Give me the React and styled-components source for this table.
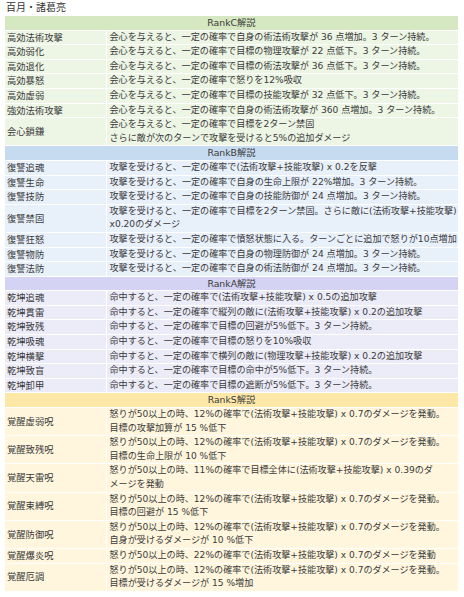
import React from 'react'
import styled, { createGlobalStyle } from 'styled-components'

const GlobalStyle = createGlobalStyle`
  html, body {
    margin: 0;
    padding: 0;
    background: #ffffff;
  }
  body {
    font-family: "DejaVu Sans", "Noto Sans CJK JP", sans-serif;
    color: #3a3a3a;
  }
`

const tones = {
  C: { head: '#d5e8c1', row: '#edf5e5' },
  B: { head: '#c7dbf0', row: '#e8f0fa' },
  A: { head: '#d4d3f4', row: '#ececf8' },
  S: { head: '#fde8a8', row: '#fff6dd' }
}

const Page = styled.div`
  width: 464px;
  padding: 0 6px 0 5px;
  box-sizing: border-box;
`

const Title = styled.div`
  height: 15px;
  line-height: 15px;
  padding-left: 1px;
  font-size: 10px;
  color: #333333;
`

const Table = styled.table`
  width: 453px;
  border-collapse: collapse;
  table-layout: fixed;
  font-size: 9.3px;
  line-height: 13.6px;
`

const HeadCell = styled.td`
  background: ${props => tones[props.$tone].head};
  text-align: center;
  padding: 0;
  border: 1px solid #ffffff;
  border-left: none;
  border-right: none;
`

const Row = styled.tr`
  background: ${props => tones[props.$tone].row};
`

const NameCell = styled.td`
  width: 101px;
  padding: 0 0 0 2px;
  vertical-align: middle;
  white-space: nowrap;
  border-bottom: 1px solid #ffffff;
  border-right: 1px solid #ffffff;
`

const DescCell = styled.td`
  padding: 0 0 0 3px;
  font-size: 9.1px;
  white-space: nowrap;
  border-bottom: 1px solid #ffffff;
`

const Line = styled.div``

const sections = [
  {
    rank: 'C',
    rows: [
      ['高効法術攻撃', ['会心を与えると、一定の確率で自身の術法術攻撃が 36 点増加。3 ターン持続。']],
      ['高効弱化', ['会心を与えると、一定の確率で目標の物理攻撃が 22 点低下。3 ターン持続。']],
      ['高効退化', ['会心を与えると、一定の確率で目標の術法攻撃が 36 点低下。3 ターン持続。']],
      ['高効暴怒', ['会心を与えると、一定の確率で怒りを12%吸収']],
      ['高効虚弱', ['会心を与えると、一定の確率で目標の技能攻撃が 32 点低下。3 ターン持続。']],
      ['強効法術攻撃', ['会心を与えると、一定の確率で自身の術法術攻撃が 360 点増加。3 ターン持続。']],
      ['会心鎖鎌', ['会心を与えると、一定の確率で目標を2ターン禁固', 'さらに敵が次のターンで攻撃を受けると5%の追加ダメージ']]
    ]
  },
  {
    rank: 'B',
    rows: [
      ['復讐追魂', ['攻撃を受けると、一定の確率で(法術攻撃+技能攻撃) x 0.2を反撃']],
      ['復讐生命', ['攻撃を受けると、一定の確率で自身の生命上限が 22%増加。3 ターン持続。']],
      ['復讐技防', ['攻撃を受けると、一定の確率で自身の技能防御が 24 点増加。3 ターン持続。']],
      ['復讐禁固', ['攻撃を受けると、一定の確率で目標を2ターン禁固。さらに敵に(法術攻撃+技能攻撃)', 'x0.20のダメージ']],
      ['復讐狂怒', ['攻撃を受けると、一定の確率で憤怒状態に入る。ターンごとに追加で怒りが10点増加']],
      ['復讐物防', ['攻撃を受けると、一定の確率で自身の物理防御が 24 点増加。3 ターン持続。']],
      ['復讐法防', ['攻撃を受けると、一定の確率で自身の術法防御が 24 点増加。3 ターン持続。']]
    ]
  },
  {
    rank: 'A',
    rows: [
      ['乾坤追魂', ['命中すると、一定の確率で(法術攻撃+技能攻撃) x 0.5の追加攻撃']],
      ['乾坤貫雷', ['命中すると、一定の確率で縦列の敵に(法術攻撃+技能攻撃) x 0.2の追加攻撃']],
      ['乾坤致残', ['命中すると、一定の確率で目標の回避が5%低下。3 ターン持続。']],
      ['乾坤吸魂', ['命中すると、一定の確率で目標の怒りを10%吸収']],
      ['乾坤横撃', ['命中すると、一定の確率で横列の敵に(物理攻撃+技能攻撃) x 0.2の追加攻撃']],
      ['乾坤致盲', ['命中すると、一定の確率で目標の命中が5%低下。3 ターン持続。']],
      ['乾坤卸甲', ['命中すると、一定の確率で目標の遮断が5%低下。3 ターン持続。']]
    ]
  },
  {
    rank: 'S',
    rows: [
      ['覚醒虚弱呪', ['怒りが50以上の時、12%の確率で(法術攻撃+技能攻撃) x 0.7のダメージを発動。', '目標の攻撃加算が 15 %低下']],
      ['覚醒致残呪', ['怒りが50以上の時、12%の確率で(法術攻撃+技能攻撃) x 0.7のダメージを発動。', '目標の生命上限が 10 %低下']],
      ['覚醒天雷呪', ['怒りが50以上の時、11%の確率で目標全体に(法術攻撃+技能攻撃) x 0.39のダ', 'メージを発動']],
      ['覚醒束縛呪', ['怒りが50以上の時、12%の確率で(法術攻撃+技能攻撃) x 0.7のダメージを発動。', '目標の回避が 15 %低下']],
      ['覚醒防御呪', ['怒りが50以上の時、12%の確率で(法術攻撃+技能攻撃) x 0.7のダメージを発動。', '自身が受けるダメージが 10 %低下']],
      ['覚醒爆炎呪', ['怒りが50以上の時、22%の確率で(法術攻撃+技能攻撃) x 0.7のダメージを発動']],
      ['覚醒厄調', ['怒りが50以上の時、12%の確率で(法術攻撃+技能攻撃) x 0.7のダメージを発動。', '目標が受けるダメージが 15 %増加']]
    ]
  }
]

const App = () => (
  <Page>
    <GlobalStyle />
    <Title>百月・諸葛亮</Title>
    <Table>
      <colgroup>
        <col style={{ width: 101 }} />
        <col />
      </colgroup>
      <tbody>
        {sections.map(section => (
          <React.Fragment key={section.rank}>
            <tr>
              <HeadCell colSpan={2} $tone={section.rank}>
                Rank{section.rank}解説
              </HeadCell>
            </tr>
            {section.rows.map(([name, lines]) => (
              <Row key={name} $tone={section.rank}>
                <NameCell>{name}</NameCell>
                <DescCell>
                  {lines.map(line => (
                    <Line key={line}>{line}</Line>
                  ))}
                </DescCell>
              </Row>
            ))}
          </React.Fragment>
        ))}
      </tbody>
    </Table>
  </Page>
)

export default App
